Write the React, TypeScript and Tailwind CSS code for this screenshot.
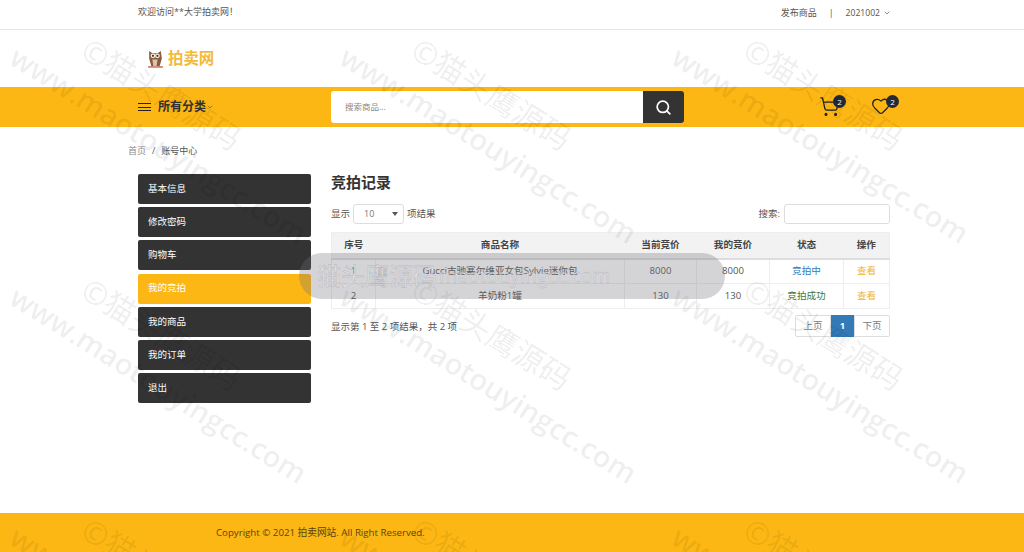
import { ChevronDown, Search, ShoppingCart, Heart } from 'lucide-react';

const sideMenu = ['基本信息', '修改密码', '购物车', '我的竞拍', '我的商品', '我的订单', '退出'];

const records = [
  { id: 1, name: 'Gucci古驰塞尔维亚女包Sylvie迷你包', current: 8000, mine: 8000, status: '竞拍中', statusClass: 'text-[#337ab7]' },
  { id: 2, name: '羊奶粉1罐', current: 130, mine: 130, status: '竞拍成功', statusClass: 'text-[#3c763d]' },
];

const wmRows = [45, 285, 525];
const wmCols = [15, 345, 677];

function Watermark() {
  return (
    <div className="pointer-events-none absolute inset-0 overflow-hidden">
      {wmRows.map(top =>
        wmCols.map(left => (
          <div key={`${top}-${left}`}>
            <span
              className="absolute origin-top-left rotate-[32deg] whitespace-nowrap text-[29px] font-semibold leading-none text-black/[0.08]"
              style={{ top: top - 4, left: left + 6 }}
            >
              www.maotouyingcc.com
            </span>
            <span
              className="absolute origin-top-left rotate-[32deg] whitespace-nowrap text-[31px] leading-none text-black/[0.08]"
              style={{ top: top - 12, left: left + 78 }}
            >
              ©猫头鹰源码
            </span>
          </div>
        )),
      )}
    </div>
  );
}

export default function App() {
  return (
    <div className="relative h-[552px] w-[1024px] overflow-hidden bg-white font-['Open_Sans','Noto_Sans_CJK_SC',sans-serif] text-[#333]">
      {/* Top bar */}
      <div className="flex h-[30px] items-center justify-between border-b border-[#e5e5e5] pb-[5px] pl-[138px] pr-[133px] text-[9px] text-[#555]">
        <span>欢迎访问**大学拍卖网！</span>
        <div className="flex items-center pt-[2px]">
          <span>发布商品</span>
          <span className="mx-[12px]">|</span>
          <span className="text-[8.6px]">2021002</span>
          <ChevronDown className="ml-[3px] h-2 w-2" />
        </div>
      </div>

      {/* Logo */}
      <div className="flex h-[57px] items-center pl-[147px]">
        <svg viewBox="0 0 16 18" className="h-[19px] w-[17px]">
          <path d="M2 2l3 2h5l3-2 1 7-2 7H4L2 9z" fill="#8a5a3c" />
          <circle cx="5.6" cy="6.5" r="2.3" fill="#f4e6d6" />
          <circle cx="9.8" cy="6.5" r="2.3" fill="#f4e6d6" />
          <circle cx="5.6" cy="6.5" r="1" fill="#333" />
          <circle cx="9.8" cy="6.5" r="1" fill="#333" />
          <path d="M5 10h5l-1 6H6z" fill="#d9c4ad" />
          <path d="M1 17h14" stroke="#b5533c" strokeWidth="1.2" />
        </svg>
        <span className="ml-[4px] text-[15.4px] font-bold text-[#f5b93a]">拍卖网</span>
      </div>

      {/* Nav */}
      <div className="flex h-[40px] items-center bg-[#fdb714] pl-[138px]">
        <div className="flex w-[193px] items-center">
          <div className="flex w-[13px] flex-col gap-[2.5px]">
            <div className="h-px bg-[#222]" />
            <div className="h-px bg-[#222]" />
            <div className="h-px bg-[#222]" />
          </div>
          <span className="ml-[7px] text-[12px] font-semibold text-[#333]">所有分类</span>
          <ChevronDown className="h-2 w-2 text-[#555]" />
        </div>
        <div className="flex h-[32px] w-[353px]">
          <div className="flex flex-1 items-center rounded-l-[3px] bg-white pl-[14px] text-[8.5px] text-[#888]">搜索商品...</div>
          <div className="flex w-[41px] items-center justify-center rounded-r-[3px] bg-[#333]">
            <Search className="h-[17px] w-[17px] text-white" strokeWidth={2.4} />
          </div>
        </div>
        <div className="relative ml-[135px] h-[22px] w-[22px]">
          <ShoppingCart className="h-[21px] w-[21px] text-[#222]" strokeWidth={1.5} />
          <span className="absolute -right-[5px] -top-[1px] flex h-[13px] w-[13px] items-center justify-center rounded-full bg-[#222b36] text-[8px] text-white">2</span>
        </div>
        <div className="relative ml-[30px] h-[22px] w-[22px]">
          <Heart className="h-[20px] w-[20px] text-[#222]" strokeWidth={1.5} />
          <span className="absolute -right-[6px] -top-[1px] flex h-[13px] w-[13px] items-center justify-center rounded-full bg-[#222b36] text-[8px] text-white">2</span>
        </div>
      </div>

      {/* Breadcrumb */}
      <div className="flex h-[46px] items-center pl-[128px] pt-[1px] text-[9px]">
        <span className="text-[#888]">首页</span>
        <span className="mx-[6px] text-[#555]">/</span>
        <span className="text-[#555]">账号中心</span>
      </div>

      <div className="flex h-[340px] pl-[138px]">
        {/* Sidebar */}
        <div className="mt-px flex w-[173px] flex-col gap-[3.2px]">
          {sideMenu.map(item => (
            <div
              key={item}
              className={`flex h-[30px] items-center rounded-[2px] pl-[10px] text-[9.5px] text-white ${item === '我的竞拍' ? 'bg-[#fdb714]' : 'bg-[#333]'}`}
            >
              {item}
            </div>
          ))}
        </div>

        {/* Content */}
        <div className="ml-[20px] w-[559px]">
          <h2 className="h-[31px] text-[15px] font-bold leading-[18px] text-[#333]">竞拍记录</h2>
          <div className="flex h-[28px] items-start justify-between text-[9.5px] text-[#555]">
            <div className="flex items-center">
              <span>显示</span>
              <div className="relative mx-[3px] flex h-[20px] w-[51px] items-center rounded-[3px] border border-[#ddd] pl-[10px] text-[9px] text-[#777]">
                10
                <span className="absolute right-[5px] top-[7px] h-0 w-0 border-x-[3px] border-t-[4px] border-x-transparent border-t-[#555]" />
              </div>
              <span>项结果</span>
            </div>
            <div className="flex items-center">
              <span className="mr-[4px]">搜索:</span>
              <div className="h-[20px] w-[106px] rounded-[3px] border border-[#ddd]" />
            </div>
          </div>

          <table className="w-full table-fixed border-collapse border border-[#eee] text-[9.6px]">
            <thead>
              <tr className="h-[26px] border-b-2 border-[#ddd] bg-[#f2f2f2] text-center font-bold text-[#444]">
                <th className="w-[44px]">序号</th>
                <th className="w-[249px]">商品名称</th>
                <th className="w-[72px]">当前竞价</th>
                <th className="w-[73px]">我的竞价</th>
                <th className="w-[74px]">状态</th>
                <th>操作</th>
              </tr>
            </thead>
            <tbody className="text-center text-[#555]">
              {records.map(r => (
                <tr key={r.id} className="h-[25px] border-b border-[#eee]">
                  <td className="border-r border-[#eee]">{r.id}</td>
                  <td className="border-r border-[#eee]">{r.name}</td>
                  <td className="border-r border-[#eee]">{r.current}</td>
                  <td className="border-r border-[#eee]">{r.mine}</td>
                  <td className={`border-r border-[#eee] ${r.statusClass}`}>{r.status}</td>
                  <td className="text-[#f0b429]">查看</td>
                </tr>
              ))}
            </tbody>
          </table>

          <div className="mt-[6px] flex items-start justify-between text-[9.5px] text-[#555]">
            <span className="mt-[5px]">显示第 1 至 2 项结果，共 2 项</span>
            <div className="flex h-[22px] items-center text-[#777]">
              <span className="flex h-full w-[36px] items-center justify-center rounded-l-[2px] border border-[#ddd]">上页</span>
              <span className="flex h-full w-[23px] items-center justify-center bg-[#337ab7] font-bold text-white">1</span>
              <span className="flex h-full w-[36px] items-center justify-center rounded-r-[2px] border border-[#ddd]">下页</span>
            </div>
          </div>
        </div>
      </div>

      {/* Footer */}
      <div className="h-[39px] bg-[#fdb714] pl-[216px] pt-[13px] text-[9.7px] leading-[14px] text-[#5a4410]">
        Copyright © 2021 拍卖网站. All Right Reserved.
      </div>

      <Watermark />
      {/* Overlay pill */}
      <div className="absolute left-[299px] top-[253px] flex h-[46px] w-[426px] items-center whitespace-nowrap rounded-[23px] bg-[#70707a]/30 pl-[18px] text-[#e8e8ec]/50 [-webkit-text-stroke:0.3px_#a8a8ad]">
        <span className="text-[24px]">猫头鹰源码</span>
        <span className="ml-[2px] text-[19.5px]">maotouyingcc.com</span>
      </div>
    </div>
  );
}
